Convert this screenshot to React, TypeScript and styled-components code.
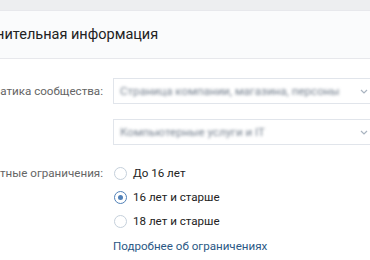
import React from 'react';
import styled, {createGlobalStyle} from 'styled-components';

const GlobalStyle = createGlobalStyle`
    body {
        margin: 0;
        background: #ffffff;
        font-family: Roboto, 'Open Sans', 'Liberation Sans', sans-serif;
        font-size: 11.6px;
        color: #000000;
        overflow: hidden;
    }
`;

const Page = styled.div`
    width: 370px;
    height: 260px;
    overflow: hidden;
    background: #ffffff;
`;

const TopStrip = styled.div`
    height: 10px;
    background: #edeef0;
`;

const Header = styled.div`
    height: 47px;
    display: flex;
    align-items: center;
    background: #fafbfc;
    border-top: 1px solid #e7e8ec;
    border-bottom: 1px solid #e7e8ec;
    overflow: hidden;
`;

const Title = styled.h2`
    margin: 0 0 0 -48px;
    font-size: 14.5px;
    font-weight: 400;
    color: #222222;
    white-space: nowrap;
`;

const Form = styled.div`
    margin-left: -97px;
    padding-top: 19px;
    display: flex;
    flex-direction: column;
`;

const Row = styled.div<{$gap?: number}>`
    display: flex;
    align-items: flex-start;
    margin-bottom: ${p => p.$gap ?? 0}px;
`;

const Label = styled.div<{$lineHeight: number}>`
    flex: 0 0 200px;
    padding-right: 10px;
    text-align: right;
    color: #656565;
    white-space: nowrap;
    line-height: ${p => p.$lineHeight}px;
`;

const Fields = styled.div`
    display: flex;
    flex-direction: column;
`;

const Select = styled.div`
    position: relative;
    box-sizing: border-box;
    width: 280px;
    height: 26px;
    border: 1px solid #e1e5eb;
    background: #ffffff;
    display: flex;
    align-items: center;
    padding-left: 6px;
    margin-bottom: 15px;
`;

const Blurred = styled.span`
    color: #76818f;
    filter: blur(1.4px);
    white-space: nowrap;
`;

const Arrow = styled.svg`
    position: absolute;
    left: 246px;
    top: 10px;
`;

const RadioRow = styled.label`
    display: flex;
    align-items: center;
    height: 24px;
    margin-left: 1px;
    color: #222222;
    cursor: pointer;
`;

const RadioCircle = styled.span<{$checked?: boolean}>`
    box-sizing: border-box;
    width: 13px;
    height: 13px;
    border-radius: 50%;
    border: 1px solid ${p => (p.$checked ? '#5181b8' : '#c5d0db')};
    background: #ffffff;
    margin-right: 6px;
    display: flex;
    align-items: center;
    justify-content: center;

    &::after {
        content: '';
        display: ${p => (p.$checked ? 'block' : 'none')};
        width: 5px;
        height: 5px;
        border-radius: 50%;
        background: #5181b8;
    }
`;

const MoreLink = styled.a`
    display: block;
    margin-top: 6px;
    color: #2a5885;
    text-decoration: none;
`;

const options = [
    {text: 'До 16 лет', checked: false},
    {text: '16 лет и старше', checked: true},
    {text: '18 лет и старше', checked: false},
];

const ChevronDown = () => (
    <Arrow width='8' height='5' viewBox='0 0 8 5'>
        <path
            d='M1 1l3 3 3-3'
            fill='none'
            stroke='#a9b4c0'
            strokeWidth='1.2'
        />
    </Arrow>
);

const App = () => {
    return (
        <Page>
            <GlobalStyle/>
            <TopStrip/>
            <Header>
                <Title>{'Дополнительная информация'}</Title>
            </Header>
            <Form>
                <Row $gap={1}>
                    <Label $lineHeight={26}>{'Тематика сообщества:'}</Label>
                    <Fields>
                        <Select>
                            <Blurred>{'Страница компании, магазина, персоны'}</Blurred>
                            <ChevronDown/>
                        </Select>
                        <Select>
                            <Blurred>{'Компьютерные услуги и IT'}</Blurred>
                            <ChevronDown/>
                        </Select>
                    </Fields>
                </Row>
                <Row>
                    <Label $lineHeight={24}>{'Возрастные ограничения:'}</Label>
                    <Fields>
                        {options.map(o => (
                            <RadioRow key={o.text}>
                                <RadioCircle $checked={o.checked}/>
                                {o.text}
                            </RadioRow>
                        ))}
                        <MoreLink href='#'>{'Подробнее об ограничениях'}</MoreLink>
                    </Fields>
                </Row>
            </Form>
        </Page>
    );
};

export default App;
